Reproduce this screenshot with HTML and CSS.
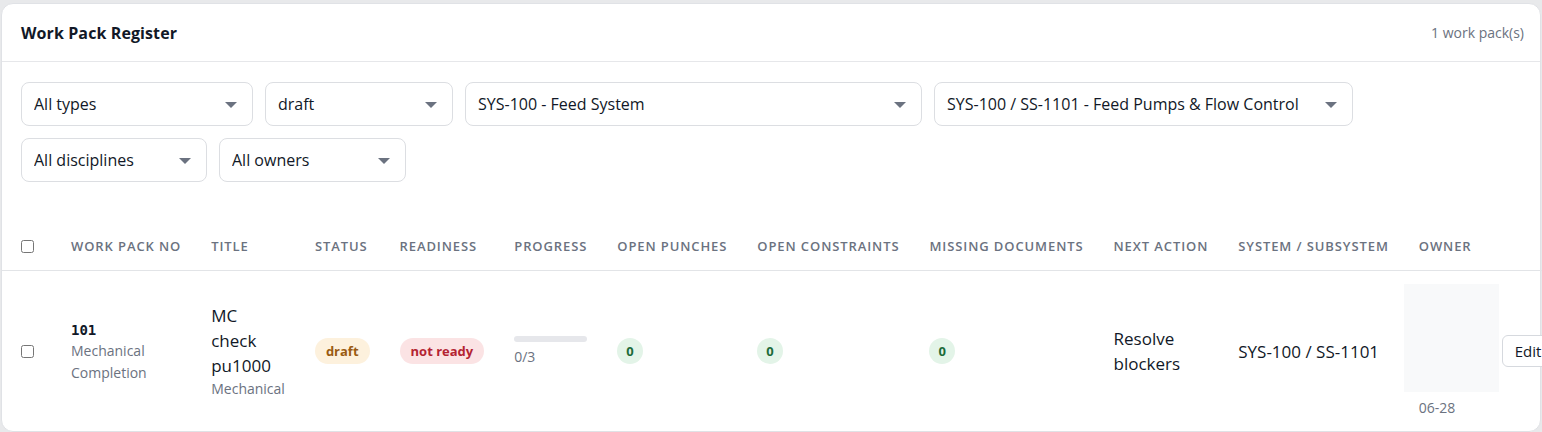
FILE: index.html
```html
<!DOCTYPE html>
<html>
<head>
    <meta charset="utf-8">
    <title>Work Pack Register</title>
    <link rel="stylesheet" href="styles.css">
</head>
<body>
    <div class="card">
        <div class="card-header">
            <h2 class="card-title">Work Pack Register</h2>
            <span class="count">1 work pack(s)</span>
        </div>

        <div class="filters">
            <div class="filter-row">
                <div class="select-wrap w-types">
                    <select class="filter-select"><option>All types</option></select>
                </div>
                <div class="select-wrap w-status">
                    <select class="filter-select"><option>draft</option></select>
                </div>
                <div class="select-wrap w-system">
                    <select class="filter-select"><option>SYS-100 - Feed System</option></select>
                </div>
                <div class="select-wrap w-subsystem">
                    <select class="filter-select"><option>SYS-100 / SS-1101 - Feed Pumps &amp; Flow Control</option></select>
                </div>
            </div>
            <div class="filter-row">
                <div class="select-wrap w-disc">
                    <select class="filter-select"><option>All disciplines</option></select>
                </div>
                <div class="select-wrap w-owner">
                    <select class="filter-select"><option>All owners</option></select>
                </div>
            </div>
        </div>

        <table class="register">
            <thead>
                <tr>
                    <th class="check-col"><input type="checkbox" class="check"></th>
                    <th>Work Pack No</th>
                    <th>Title</th>
                    <th>Status</th>
                    <th>Readiness</th>
                    <th>Progress</th>
                    <th>Open Punches</th>
                    <th>Open Constraints</th>
                    <th>Missing Documents</th>
                    <th>Next Action</th>
                    <th>System / Subsystem</th>
                    <th>Owner</th>
                    <th class="actions-col"></th>
                </tr>
            </thead>
            <tbody>
                <tr>
                    <td class="check-col"><input type="checkbox" class="check"></td>
                    <td>
                        <div class="pack-no">101</div>
                        <div class="muted">Mechanical Completion</div>
                    </td>
                    <td>
                        <div class="title-text">MC check pu1000</div>
                        <div class="muted">Mechanical</div>
                    </td>
                    <td><span class="badge badge-draft">draft</span></td>
                    <td><span class="badge badge-danger">not ready</span></td>
                    <td>
                        <div class="progress"><div class="progress-fill" style="width: 0%"></div></div>
                        <div class="progress-label">0/3</div>
                    </td>
                    <td><span class="badge badge-ok">0</span></td>
                    <td><span class="badge badge-ok">0</span></td>
                    <td><span class="badge badge-ok">0</span></td>
                    <td class="body-text">Resolve blockers</td>
                    <td class="body-text nowrap">SYS-100 / SS-1101</td>
                    <td class="owner-cell">
                        <div class="owner-box"></div>
                        <div class="owner-date">06-28</div>
                    </td>
                    <td class="actions-col"><button class="btn-edit">Edit</button></td>
                </tr>
            </tbody>
        </table>
    </div>
</body>
</html>
```

FILE: styles.css
```css
html, body {
    margin: 0;
    overflow: hidden;
}
body {
    background-color: #e8e9eb;
    padding: 3px 1px 0 1px;
    font-family: "Open Sans", "Noto Sans", sans-serif;
    color: #111827;
}

.card {
    background-color: #fff;
    border: 1px solid #e0e2e6;
    border-radius: 12px;
}

.card-header {
    display: flex;
    align-items: center;
    justify-content: space-between;
    height: 57px;
    padding: 0 16px 0 19px;
    border-bottom: 1px solid #e6e7ea;
}
.card-title {
    margin: 0;
    font-size: 16px;
    font-weight: 700;
    letter-spacing: 0.1px;
}
.count {
    font-size: 14px;
    color: #6b7280;
}

/* filters */
.filters {
    display: flex;
    flex-direction: column;
    gap: 12px;
    padding: 20px 19px 0 19px;
}
.filter-row {
    display: flex;
    gap: 12px;
}
.select-wrap {
    position: relative;
}
.select-wrap::after {
    content: "";
    position: absolute;
    right: 16px;
    top: 20px;
    border-left: 6px solid transparent;
    border-right: 6px solid transparent;
    border-top: 6px solid #6b7280;
    pointer-events: none;
}
.filter-select {
    appearance: none;
    -webkit-appearance: none;
    width: 100%;
    height: 44px;
    padding: 0 36px 0 12px;
    border: 1px solid #dcdee2;
    border-radius: 8px;
    background-color: #fff;
    font-family: inherit;
    font-size: 16px;
    color: #111827;
}
.w-types { width: 232px; }
.w-status { width: 188px; }
.w-system { width: 457px; }
.w-subsystem { width: 419px; }
.w-disc { width: 186px; }
.w-owner { width: 187px; }

/* table */
.register {
    width: 100%;
    margin-top: 40px;
    border-collapse: collapse;
}
.register th {
    padding: 0 15px;
    height: 48px;
    text-align: left;
    white-space: nowrap;
    font-size: 13px;
    font-weight: 600;
    letter-spacing: 0.9px;
    text-transform: uppercase;
    color: #6b7280;
    border-bottom: 1px solid #e2e4e7;
}
.register td {
    padding: 13px 15px;
    vertical-align: middle;
    font-size: 14px;
}
.register .check-col {
    padding: 0 22px 0 19px;
}
.check {
    margin: 0;
    display: block;
    width: 13px;
    height: 13px;
}

.pack-no {
    font-family: "DejaVu Sans Mono", "Liberation Mono", monospace;
    font-size: 14px;
    font-weight: 700;
    line-height: 20px;
    margin-top: 2px;
}
.muted {
    color: #6b7280;
    font-size: 14px;
    line-height: 22px;
}
.title-text {
    font-size: 17px;
    line-height: 25px;
}
.register .body-text {
    font-size: 17px;
    line-height: 25px;
}
.nowrap {
    white-space: nowrap;
}

.badge {
    display: inline-block;
    padding: 3px 11px;
    border-radius: 999px;
    font-size: 13px;
    font-weight: 700;
    line-height: 20px;
    white-space: nowrap;
}
.badge-draft {
    background-color: #fdf1dd;
    color: #9a5b12;
}
.badge-danger {
    background-color: #fbe3e4;
    color: #b42332;
}
.badge-ok {
    padding: 3px 9px;
    background-color: #e3f4e8;
    color: #1c6b3a;
}

.progress {
    width: 73px;
    height: 6px;
    border-radius: 3px;
    background-color: #e6e7eb;
    overflow: hidden;
}
.progress-fill {
    height: 100%;
    background-color: #2f855a;
}
.progress-label {
    margin-top: 5px;
    font-size: 14px;
    color: #6b7280;
}

.register .owner-cell {
    padding: 13px 0;
}
.owner-box {
    width: 95px;
    height: 108px;
    background-color: #f8f9fa;
}
.owner-date {
    padding: 6px 0 0 15px;
    font-size: 14px;
    line-height: 20px;
    color: #6b7280;
}

.register .actions-col {
    padding: 0 15px 0 3px;
}
.btn-edit {
    height: 32px;
    padding: 0 12px;
    border: 1px solid #d6d9de;
    border-radius: 6px;
    background-color: #fff;
    font-family: inherit;
    font-size: 15px;
    font-weight: 500;
    color: #111827;
}
```
